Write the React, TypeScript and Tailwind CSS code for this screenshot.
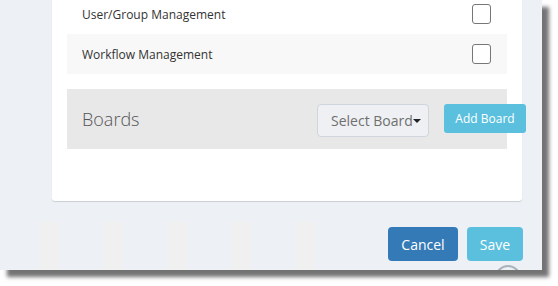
const rows = [
  { label: 'User/Group Management', shaded: false },
  { label: 'Workflow Management', shaded: true },
];

const bars = [0, 1, 2, 3, 4];

function App() {
  return (
    <div className="w-[558px] h-[286px] bg-white font-['Open_Sans',sans-serif]">
      <div className="relative w-[542px] h-[270px] bg-[#edf0f5] overflow-hidden shadow-[7px_7px_4px_rgba(0,0,0,0.55)]">
        {/* Card */}
        <div className="ml-[52px] -mt-[6px] w-[470px] h-[207px] bg-white rounded-b-[3px] shadow-[0_1px_1px_rgba(0,0,0,0.15)] px-[15px]">
          {rows.map(r => (
            <div
              key={r.label}
              className={`h-[40px] flex items-center justify-between pl-[15px] pr-[16px] ${r.shaded ? 'bg-[#f8f8f8]' : 'bg-white'}`}
            >
              <span className="text-[12px] text-[#333] pt-[1px]">{r.label}</span>
              <span className="w-[19px] h-[20px] rounded-[3px] border border-[#777] bg-white" />
            </div>
          ))}

          {/* Boards */}
          <div className="mt-[15px] h-[60px] bg-[#e8e8e8] flex items-center pl-[15px]">
            <span className="text-[18px] font-light text-[#555]">Boards</span>
            <div className="ml-auto flex items-start gap-[15px] -mr-[19px] mt-[3px]">
              <button className="w-[112px] h-[33px] rounded-[4px] border border-[#cfd6dd] bg-[#eef0f3] flex items-center pl-[13px] text-[14px] text-[#6f6f6f] whitespace-nowrap">
                Select Board
                <span className="w-0 h-0 border-l-[4px] border-r-[4px] border-t-[4px] border-l-transparent border-r-transparent border-t-[#222]" />
              </button>
              <button className="w-[82px] h-[29px] rounded-[3px] bg-[#5bc0de] text-white text-[12px] whitespace-nowrap">
                Add Board
              </button>
            </div>
          </div>
        </div>

        {/* Footer */}
        <div className="mt-[21px] h-[48px] flex items-start">
          <div className="flex gap-[45px] pl-[40px] h-full">
            {bars.map(b => (
              <div key={b} className="w-[19px] h-full bg-[#f0f0f0]" />
            ))}
          </div>
          <div className="ml-auto mr-[19px] mt-[5px] flex gap-[9px]">
            <button className="w-[70px] h-[34px] rounded-[4px] bg-[#337ab7] text-white text-[14px]">Cancel</button>
            <button className="w-[56px] h-[34px] rounded-[4px] bg-[#5bc0de] text-white text-[14px]">Save</button>
          </div>
        </div>

        {/* scroll-top circle peeking */}
        <div className="absolute left-[495px] top-[265px] w-[26px] h-[26px] rounded-full border-2 border-[#a9b3bd]" />
      </div>
    </div>
  );
}

export default App;
